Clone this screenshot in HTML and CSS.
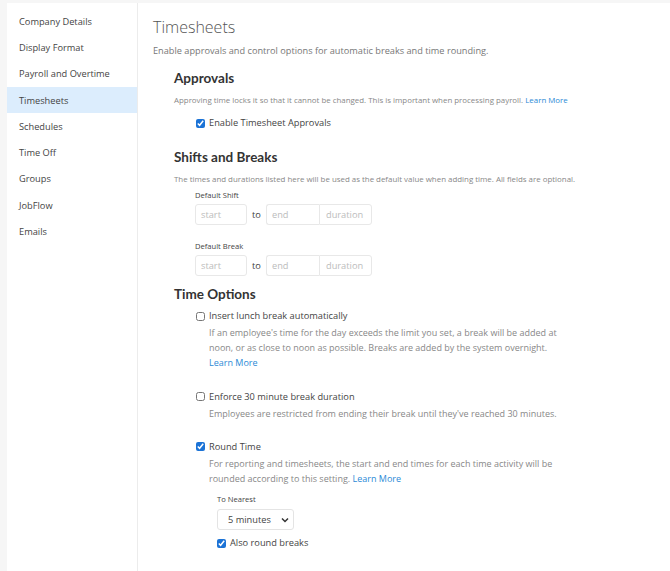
FILE: index.html
```html
<!DOCTYPE html>
<html lang="en">
<head>
  <meta charset="UTF-8">
  <meta name="viewport" content="width=device-width, initial-scale=1.0">
  <title>Timesheets Settings</title>
  <link rel="stylesheet" href="styles.css">
</head>
<body>
  <div class="settings">
    <!-- Settings navigation -->
    <nav class="side-nav">
      <a href="#">Company Details</a>
      <a href="#">Display Format</a>
      <a href="#">Payroll and Overtime</a>
      <a href="#" class="active">Timesheets</a>
      <a href="#">Schedules</a>
      <a href="#">Time Off</a>
      <a href="#">Groups</a>
      <a href="#">JobFlow</a>
      <a href="#">Emails</a>
    </nav>

    <main class="content">
      <h1>Timesheets</h1>
      <p class="lead">Enable approvals and control options for automatic breaks and time rounding.</p>

      <!-- Approvals -->
      <section class="section">
        <h2>Approvals</h2>
        <p class="hint">Approving time locks it so that it cannot be changed. This is important when processing payroll. <a href="#">Learn More</a></p>
        <label class="check approvals-check">
          <input type="checkbox" checked>
          <span>Enable Timesheet Approvals</span>
        </label>
      </section>

      <!-- Shifts and Breaks -->
      <section class="section shifts">
        <h2>Shifts and Breaks</h2>
        <p class="hint">The times and durations listed here will be used as the default value when adding time. All fields are optional.</p>
        <div class="field">
          <div class="field-label">Default Shift</div>
          <div class="time-range">
            <input type="text" class="time-input" placeholder="start">
            <span class="to">to</span>
            <div class="input-group">
              <input type="text" class="time-input" placeholder="end">
              <input type="text" class="time-input" placeholder="duration">
            </div>
          </div>
        </div>
        <div class="field">
          <div class="field-label">Default Break</div>
          <div class="time-range">
            <input type="text" class="time-input" placeholder="start">
            <span class="to">to</span>
            <div class="input-group">
              <input type="text" class="time-input" placeholder="end">
              <input type="text" class="time-input" placeholder="duration">
            </div>
          </div>
        </div>
      </section>

      <!-- Time Options -->
      <section class="section options">
        <h2>Time Options</h2>

        <div class="option">
          <label class="check">
            <input type="checkbox">
            <span>Insert lunch break automatically</span>
          </label>
          <p class="desc">If an employee's time for the day exceeds the limit you set, a break will be added at noon, or as close to noon as possible. Breaks are added by the system overnight. <a href="#">Learn More</a></p>
        </div>

        <div class="option">
          <label class="check">
            <input type="checkbox">
            <span>Enforce 30 minute break duration</span>
          </label>
          <p class="desc">Employees are restricted from ending their break until they've reached 30 minutes.</p>
        </div>

        <div class="option">
          <label class="check">
            <input type="checkbox" checked>
            <span>Round Time</span>
          </label>
          <p class="desc">For reporting and timesheets, the start and end times for each time activity will be rounded according to this setting. <a href="#">Learn More</a></p>

          <div class="rounding">
            <div class="field-label">To Nearest</div>
            <div class="select-wrap">
              <select class="select">
                <option>5 minutes</option>
                <option>10 minutes</option>
                <option>15 minutes</option>
              </select>
              <svg class="chevron" width="8" height="6" viewBox="0 0 8 6"><path d="M1 1.5 L4 4.5 L7 1.5" fill="none" stroke="#333" stroke-width="1.5"/></svg>
            </div>
            <label class="check also">
              <input type="checkbox" checked>
              <span>Also round breaks</span>
            </label>
          </div>
        </div>
      </section>
    </main>
  </div>
</body>
</html>
```

FILE: styles.css
```css
* {
  margin: 0;
  padding: 0;
  box-sizing: border-box;
}

body {
  font-family: 'Open Sans', 'Liberation Sans', sans-serif;
  background: #f6f6f6;
  color: #444;
  font-size: 9.25px;
}

a {
  color: #2b8ad6;
  text-decoration: none;
  white-space: nowrap;
}

.settings {
  display: flex;
  margin: 3px 0 0 7px;
  background: #fff;
  min-height: 600px;
}

/* Sidebar */
.side-nav {
  width: 131px;
  flex-shrink: 0;
  border-right: 1px solid #ececec;
  padding-top: 5px;
  display: flex;
  flex-direction: column;
}

.side-nav a {
  display: flex;
  align-items: center;
  height: 26.3px;
  padding-left: 12px;
  color: #444;
  font-size: 9.25px;
}

.side-nav a.active {
  background: #dcedfd;
}

/* Main */
.content {
  flex: 1;
  padding: 13px 0 0 15px;
}

h1 {
  font-weight: 300;
  font-size: 16px;
  color: #555;
  line-height: 22px;
}

.lead {
  font-size: 9.2px;
  color: #777;
  margin-top: 6px;
  line-height: 14px;
}

.section {
  padding-left: 21px;
  margin-top: 11px;
}

h2 {
  font-family: Lato, 'Open Sans', sans-serif;
  font-weight: 700;
  font-size: 13.5px;
  color: #333;
  line-height: 18px;
}

.hint {
  font-size: 7.9px;
  color: #888;
  margin-top: 7px;
  line-height: 12px;
}

.check {
  display: flex;
  align-items: center;
  gap: 4px;
  font-size: 9.25px;
  color: #444;
  line-height: 14px;
}

.check input {
  width: 9px;
  height: 9px;
  margin: 0;
  accent-color: #1c73d6;
}

.approvals-check {
  margin: 10px 0 0 22px;
}

.shifts {
  margin-top: 18px;
}

.field {
  padding-left: 21px;
  margin-top: 4px;
}

.field + .field {
  margin-top: 15px;
}

.field-label {
  font-size: 7.6px;
  color: #444;
  line-height: 12px;
}

.time-range {
  display: flex;
  align-items: center;
  margin-top: 3px;
}

.time-input {
  width: 52px;
  height: 21px;
  border: 1px solid #e8e8e8;
  border-radius: 3px;
  padding: 0 5px;
  font-family: inherit;
  font-size: 9.25px;
  color: #444;
  outline: none;
}

.time-input::placeholder {
  color: #bcbcbc;
}

.to {
  width: 19px;
  text-align: center;
  font-size: 9.25px;
  color: #444;
}

.input-group {
  display: flex;
}

.input-group .time-input:first-child {
  border-radius: 3px 0 0 3px;
  border-right: none;
  width: 53px;
}

.input-group .time-input:last-child {
  border-radius: 0 3px 3px 0;
  width: 53px;
  padding-left: 6px;
}

.options {
  margin-top: 9px;
}

.option {
  padding-left: 22px;
  margin-top: 6px;
}

.option + .option {
  margin-top: 19px;
}

.desc {
  padding-left: 13px;
  font-size: 9px;
  color: #888;
  line-height: 15.2px;
  max-width: 384px;
  margin-top: 2px;
}

.rounding {
  padding-left: 21px;
  margin-top: 7px;
}

.select-wrap {
  position: relative;
  width: 77px;
  margin-top: 4px;
}

.select {
  appearance: none;
  width: 77px;
  height: 21px;
  border: 1px solid #e4e4e4;
  border-radius: 3px;
  background: #fff;
  padding: 0 10px;
  font-family: inherit;
  font-size: 9.25px;
  color: #444;
}

.chevron {
  position: absolute;
  right: 5px;
  top: 8px;
  pointer-events: none;
}

.also {
  margin-top: 6px;
}
```
